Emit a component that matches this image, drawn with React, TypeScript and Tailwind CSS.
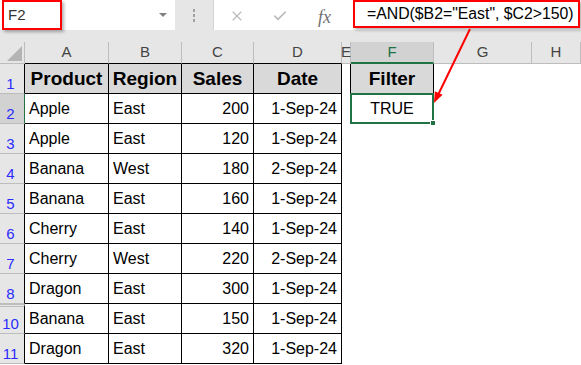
import { Check, X } from 'lucide-react'

type Row = { n: number; product: string; region: string; sales: number; date: string }

const rows: Row[] = [
  { n: 2, product: 'Apple', region: 'East', sales: 200, date: '1-Sep-24' },
  { n: 3, product: 'Apple', region: 'East', sales: 120, date: '1-Sep-24' },
  { n: 4, product: 'Banana', region: 'West', sales: 180, date: '2-Sep-24' },
  { n: 5, product: 'Banana', region: 'East', sales: 160, date: '1-Sep-24' },
  { n: 6, product: 'Cherry', region: 'East', sales: 140, date: '1-Sep-24' },
  { n: 7, product: 'Cherry', region: 'West', sales: 220, date: '2-Sep-24' },
  { n: 8, product: 'Dragon', region: 'East', sales: 300, date: '1-Sep-24' },
  { n: 10, product: 'Banana', region: 'East', sales: 150, date: '1-Sep-24' },
  { n: 11, product: 'Dragon', region: 'East', sales: 320, date: '1-Sep-24' },
]

const gridCols = 'grid grid-cols-[25px_84px_73px_72px_88px_9px_83px_98px_49px]'
const cell = 'h-[30px] border-r border-b border-black flex items-center px-[4px] text-[16px] text-black'
const headCell = `${cell} justify-center bg-[#d9d9d9] font-bold text-[19px] pt-[1px]`

function RowHeader({ n }: { n: number }) {
  const selected = n === 2
  const hidden = n === 10
  return (
    <div
      className={`h-[30px] flex items-end justify-center pr-[3px] pb-[2px] border-r border-b border-b-[#bdbdbd] text-[15px] leading-[15px] text-[#2b2bff] ${
        selected ? 'bg-[#d2d2d2] border-r-[#217346]' : 'bg-[#e6e6e6] border-r-black'
      } ${hidden ? 'border-t-[3px] border-double border-t-[#bdbdbd]' : ''}`}
    >
      {n}
    </div>
  )
}

function DataRow({ row }: { row: Row }) {
  return (
    <>
      <RowHeader n={row.n} />
      <div className={cell}>{row.product}</div>
      <div className={cell}>{row.region}</div>
      <div className={`${cell} justify-end`}>{row.sales}</div>
      <div className={`${cell} justify-end`}>{row.date}</div>
      {row.n === 2 ? (
        <>
          <div className="h-[30px] border-r border-black" />
          <div className={`${cell} justify-center relative`}>
            TRUE
            <div className="absolute -left-[1px] -top-[1px] -right-[1px] -bottom-[1px] border-2 border-[#217346]" />
            <div className="absolute -right-[3px] -bottom-[3px] w-[6px] h-[6px] bg-[#217346] border border-white" />
          </div>
        </>
      ) : (
        <>
          <div className="h-[30px]" />
          <div className="h-[30px]" />
        </>
      )}
      <div className="h-[30px]" />
      <div className="h-[30px]" />
    </>
  )
}

function ColHeader({ label, tableTop, selected }: { label: string; tableTop?: boolean; selected?: boolean }) {
  return (
    <div
      className={`h-[22px] flex items-center justify-center border-r border-r-[#bdbdbd] text-[15px] ${
        selected
          ? 'bg-[#d2d2d2] border-b-2 border-b-[#217346] text-[#217346]'
          : `bg-[#e6e6e6] border-b text-[#444444] ${tableTop ? 'border-b-black' : 'border-b-[#bdbdbd]'}`
      }`}
    >
      {label}
    </div>
  )
}

export default function App() {
  return (
    <div className="relative w-[581px] h-[365px] overflow-hidden bg-white font-['Liberation_Sans',Arial,sans-serif]">
      {/* formula bar */}
      <div className="h-[42px] bg-[#e6e6e6] flex items-start">
        <div className="w-[175px] h-[30px] bg-white flex items-center">
          <div className="ml-[2px] w-[60px] h-[30px] border-2 border-[#ff0000] shadow-[2px_2px_3px_rgba(0,0,0,0.3)] flex items-center pl-[4px] text-[15px] text-[#333333]">
            F2
          </div>
          <div className="ml-auto mr-[8px] w-0 h-0 border-l-[4px] border-r-[4px] border-t-[4px] border-l-transparent border-r-transparent border-t-[#808080]" />
        </div>
        <div className="w-[38px] h-[30px] flex flex-col items-center justify-center gap-[2px]">
          <span className="w-[2px] h-[3px] bg-[#a0a0a0]" />
          <span className="w-[2px] h-[3px] bg-[#a0a0a0]" />
          <span className="w-[2px] h-[3px] bg-[#a0a0a0]" />
        </div>
        <div className="flex-1 h-[30px] bg-white border-l border-[#d4d4d4] flex items-start">
          <X className="ml-[15px] mt-[8px] w-[16px] h-[16px] text-[#b9b9b9]" strokeWidth={1.6} />
          <Check className="ml-[27px] mt-[8px] w-[16px] h-[16px] text-[#b9b9b9]" strokeWidth={2.4} />
          <span className="ml-[30px] mt-[4px] font-['Liberation_Serif',serif] italic text-[18px] text-[#707070]">
            fx
          </span>
          <div className="ml-[22px] w-[227px] h-[28px] border-2 border-[#ff0000] bg-white shadow-[2px_2px_3px_rgba(0,0,0,0.3)] flex items-center pl-[12px] text-[15.8px] text-black whitespace-nowrap">
            =AND($B2="East", $C2&gt;150)
          </div>
        </div>
      </div>

      {/* grid */}
      <div className={gridCols}>
        <div className="h-[22px] bg-[#e6e6e6] border-r border-b border-[#bdbdbd] relative">
          <svg className="absolute left-[7px] top-[4px]" width="15" height="15" viewBox="0 0 15 15">
            <polygon points="15,0 15,15 0,15" fill="#b4b4b4" />
          </svg>
        </div>
        <ColHeader label="A" tableTop />
        <ColHeader label="B" tableTop />
        <ColHeader label="C" tableTop />
        <ColHeader label="D" tableTop />
        <ColHeader label="E" />
        <ColHeader label="F" selected />
        <ColHeader label="G" />
        <ColHeader label="H" />

        <RowHeader n={1} />
        <div className={headCell}>Product</div>
        <div className={headCell}>Region</div>
        <div className={headCell}>Sales</div>
        <div className={headCell}>Date</div>
        <div className="h-[30px] border-r border-black" />
        <div className={headCell}>Filter</div>
        <div className="h-[30px]" />
        <div className="h-[30px]" />

        {rows.map((row) => (
          <DataRow key={row.n} row={row} />
        ))}
      </div>

      {/* annotation arrow */}
      <svg className="absolute left-0 top-0 pointer-events-none" width="581" height="365">
        <line x1="470" y1="29" x2="438" y2="95" stroke="#ff0000" strokeWidth="2" />
        <polygon points="434,103 442.6,94.8 434.8,91.2" fill="#ff0000" />
      </svg>
    </div>
  )
}
